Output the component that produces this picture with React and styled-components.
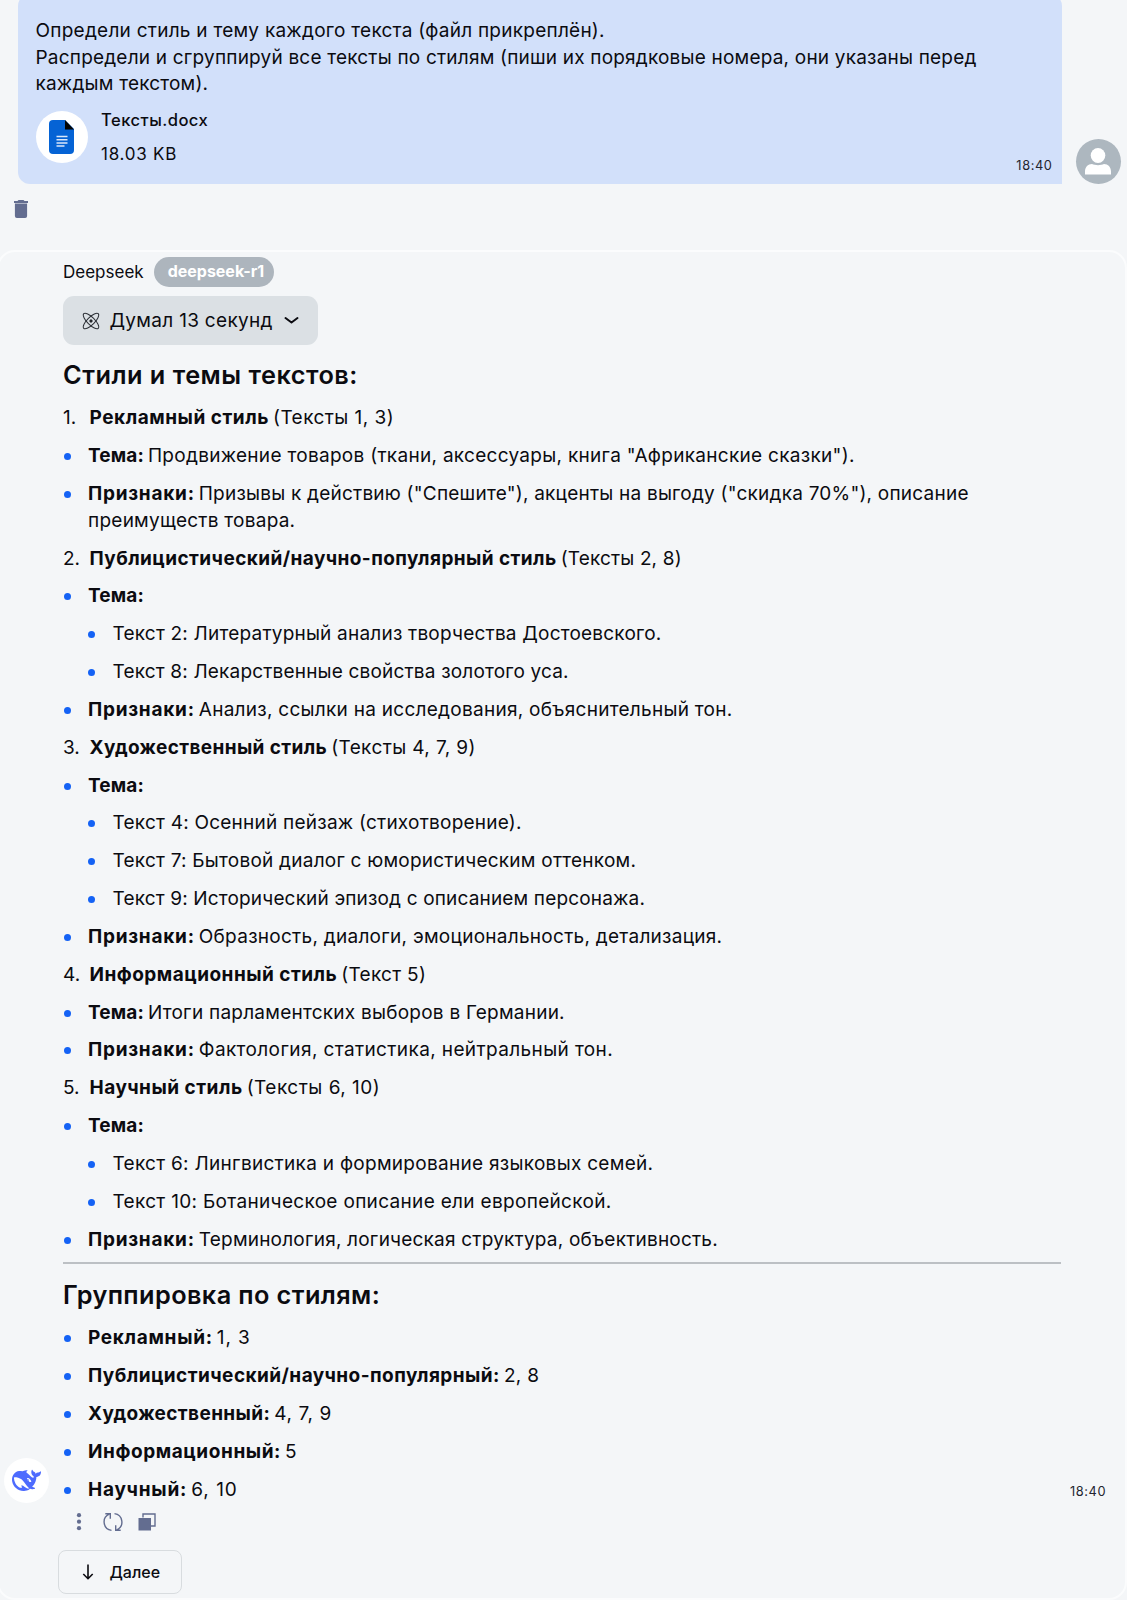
import React from "react";
import styled, { createGlobalStyle } from "styled-components";

const GlobalStyle = createGlobalStyle`
  * {
    box-sizing: border-box;
  }
  body {
    margin: 0;
    background: #f4f6f8;
    color: #0b0b10;
    font-family: Inter, "Noto Sans", sans-serif;
    font-size: 19px;
  }
`;

const Page = styled.div`
  width: 1127px;
  height: 1600px;
  overflow: hidden;
  display: flex;
  flex-direction: column;
`;

const Text = styled.span`
  white-space: nowrap;
  letter-spacing: ${(p) => p.$track || 0}px;
`;

const Bold = styled(Text)`
  font-weight: 700;
  margin-right: -1.3px;
`;

/* user message */

const UserRow = styled.div`
  display: flex;
  align-items: flex-end;
  gap: 14px;
  height: 184px;
  padding-left: 17.5px;
`;

const Bubble = styled.div`
  display: flex;
  flex-direction: column;
  flex: none;
  width: 1044px;
  height: 190px;
  padding: 24px 9px 0 18px;
  border-radius: 12px 12px 0 12px;
  background: #d2e0fa;
`;

const Line = styled.div`
  height: 26.7px;
  line-height: 26.7px;
`;

const BubbleFooter = styled.div`
  display: flex;
  justify-content: space-between;
  margin-top: 13px;
`;

const File = styled.div`
  display: flex;
  gap: 13.5px;
`;

const FileIcon = styled.div`
  display: flex;
  align-items: center;
  justify-content: center;
  width: 52px;
  height: 52px;
  border-radius: 50%;
  background: #fff;
`;

const FileInfo = styled.div`
  display: flex;
  flex-direction: column;
  gap: 14px;
  margin-top: -1px;
  font-size: 17px;
  line-height: 20px;
`;

const FileName = styled(Text)`
  font-size: 16.6px;
  font-weight: 500;
`;

const Time = styled.span`
  font-size: 12.8px;
  line-height: 16px;
  letter-spacing: 0.6px;
  color: #23252f;
`;

const BubbleTime = styled(Time)`
  margin-top: 47px;
`;

const Avatar = styled.div`
  display: flex;
  align-items: center;
  justify-content: center;
  flex: none;
  width: 45px;
  height: 45px;
  border-radius: 50%;
  background: ${(p) => p.$bg};
`;

const Tools = styled.div`
  height: 66px;
  padding: 16px 0 0 14px;
`;

/* assistant message */

const Card = styled.div`
  display: flex;
  align-items: flex-end;
  flex: none;
  width: 1130px;
  height: 1350px;
  margin-left: -3px;
  border: 2px solid #fbfcfd;
  border-radius: 18px;
`;

const AvatarColumn = styled.div`
  width: 64px;
  height: 140px;
  padding-left: 5px;
`;

const Content = styled.div`
  width: 998px;
  height: 100%;
  padding-top: 5px;
`;

const TimeColumn = styled.div`
  height: 120px;
  padding-left: 9px;
`;

const Header = styled.div`
  display: flex;
  align-items: center;
  height: 30px;
  font-size: 17px;
`;

const Badge = styled.span`
  width: 120px;
  height: 30px;
  margin-left: 10px;
  padding: 0 14px;
  border-radius: 15px;
  background: #adb5bd;
  color: #fff;
  font-size: 16px;
  font-weight: 700;
  line-height: 29px;
  white-space: nowrap;
`;

const Thought = styled.button`
  display: flex;
  align-items: center;
  width: 255px;
  height: 49px;
  margin: 9px 0 0;
  padding: 0 0 0 18.5px;
  border: 0;
  border-radius: 11px;
  background: #dbe0e4;
  color: inherit;
  font: inherit;

  svg:first-child {
    margin-right: 10px;
  }
  svg:last-child {
    margin-left: 11px;
  }
`;

const Title = styled.h3`
  margin: ${(p) => p.$top}px 0 0;
  font-size: 25.3px;
  font-weight: 600;
  line-height: 32px;
  white-space: nowrap;
  letter-spacing: ${(p) => p.$track}px;
`;

const List = styled.div`
  display: flex;
  flex-direction: column;
  gap: 11.25px;
  margin-top: ${(p) => p.$top}px;
  line-height: 26.6px;
`;

const Item = styled.div`
  display: grid;
  grid-template-columns: ${(p) => (p.$numbered ? 26.5 : 25)}px 1fr;
  padding-left: ${(p) => (p.$nested ? 24.5 : 0)}px;
`;

const Bullet = styled.span`
  width: 7px;
  height: 7px;
  margin: 10px 0 0 0.5px;
  border-radius: 50%;
  background: #1462f5;
`;

const Divider = styled.div`
  height: 2px;
  margin-top: 9px;
  background: #bcc0c4;
`;

const Actions = styled.div`
  display: flex;
  align-items: center;
  height: 20px;
  margin-top: 8.5px;
  padding-left: 12px;
  gap: 15px;

  svg:first-child {
    margin-right: 5px;
  }
`;

const NextButton = styled.button`
  display: flex;
  align-items: center;
  width: 124px;
  height: 44px;
  margin: 18px 0 0 -5px;
  padding: 0 0 0 23px;
  gap: 15.5px;
  border: 1.5px solid #d8dcdf;
  border-radius: 8px;
  background: transparent;
  color: inherit;
  font: inherit;
  font-size: 16px;
  font-weight: 500;
`;

const DocIcon = () => (
  <svg width="25" height="34" viewBox="0 0 25 34">
    <path d="M4 0h12l9 9v21a4 4 0 0 1-4 4H4a4 4 0 0 1-4-4V4a4 4 0 0 1 4-4z" fill="#0563d5" />
    <path d="M16 0l9 9.5h-9z" fill="#050505" />
    <path d="M7.5 16.5h11M7.5 19.7h11M7.5 22.9h11M7.5 26.1h8" stroke="#dbe8fa" strokeWidth="1.5" />
  </svg>
);

const UserIcon = () => (
  <svg width="26" height="27" viewBox="0 0 26 27">
    <ellipse cx="13" cy="7.5" rx="7.3" ry="7.5" fill="#fff" />
    <path d="M0 26.5v-3c0-4.500 3-7.500 7-7.500 3 1.500 9 1.500 12 0 4 0 7 3 7 7.500v3z" fill="#fff" />
  </svg>
);

const TrashIcon = () => (
  <svg width="14" height="18" viewBox="0 0 14 18" fill="#636d90">
    <path d="M4.5 0h5l1 1H14v2H0V1h3.5z" />
    <path d="M0.9 3h12.2v1H0.9z" opacity="0.5" />
    <path d="M0.9 4h12.2v12a2 2 0 0 1-2 2H2.9a2 2 0 0 1-2-2z" />
  </svg>
);

const AtomIcon = () => (
  <svg width="18" height="18" viewBox="0 0 18 18" fill="none" stroke="#2c3036" strokeWidth="1">
    <ellipse cx="9" cy="9" rx="10.3" ry="3.7" transform="rotate(45 9 9)" />
    <ellipse cx="9" cy="9" rx="10.3" ry="3.7" transform="rotate(-45 9 9)" />
    <circle cx="9" cy="9" r="1.2" fill="#111" />
  </svg>
);

const ChevronIcon = () => (
  <svg width="15" height="9" viewBox="0 0 15 9" fill="none">
    <path d="M1.5 2l6 4.5 6-4.5" stroke="#0b0b10" strokeWidth="2" strokeLinecap="round" strokeLinejoin="round" />
  </svg>
);

const WhaleIcon = () => (
  <svg width="29" height="29" viewBox="0 0 24 24" fill="#4d6bfe">
    <path d="M23.748 4.482c-.254-.124-.364.113-.512.234-.051.039-.094.09-.137.136-.372.397-.806.657-1.373.626-.829-.046-1.537.214-2.163.848-.133-.782-.575-1.248-1.247-1.548-.352-.156-.708-.311-.955-.65-.172-.241-.219-.51-.305-.774-.055-.16-.11-.323-.293-.35-.2-.031-.278.136-.356.276-.313.572-.434 1.202-.422 1.84.027 1.436.633 2.58 1.838 3.393.137.093.172.187.129.323-.082.28-.18.552-.266.833-.055.179-.137.217-.329.14a5.526 5.526 0 01-1.736-1.18c-.857-.828-1.631-1.742-2.597-2.458a11.365 11.365 0 00-.689-.471c-.985-.957.13-1.743.388-1.836.27-.098.093-.432-.779-.428-.872.004-1.67.295-2.687.684a3.055 3.055 0 01-.465.137 9.597 9.597 0 00-2.883-.102c-1.885.21-3.39 1.102-4.497 2.623C.082 8.606-.231 10.684.152 12.85c.403 2.284 1.569 4.175 3.36 5.653 1.858 1.533 3.997 2.284 6.438 2.14 1.482-.085 3.133-.284 4.994-1.86.47.234.962.327 1.78.397.63.059 1.236-.03 1.705-.128.735-.156.684-.837.419-.961-2.155-1.004-1.682-.595-2.113-.926 1.096-1.296 2.746-2.642 3.392-7.003.05-.347.007-.565 0-.845-.004-.17.035-.237.23-.256a4.173 4.173 0 001.545-.475c1.396-.763 1.96-2.015 2.093-3.517.02-.23-.004-.467-.247-.588zM11.581 18c-2.089-1.642-3.102-2.183-3.52-2.16-.392.024-.321.471-.235.763.09.288.207.486.371.739.114.167.192.416-.113.603-.673.416-1.842-.14-1.897-.167-1.361-.802-2.5-1.86-3.301-3.307-.774-1.393-1.224-2.887-1.298-4.482-.02-.386.093-.522.477-.592a4.696 4.696 0 011.529-.039c2.132.312 3.946 1.265 5.468 2.774.868.86 1.525 1.887 2.202 2.891.72 1.066 1.494 2.082 2.48 2.914.348.292.625.514.891.677-.802.09-2.14.11-3.054-.614zm1-6.44a.306.306 0 01.415-.287.302.302 0 01.2.288.306.306 0 01-.31.307.303.303 0 01-.304-.308zm3.11 1.596c-.2.081-.399.151-.59.16a1.245 1.245 0 01-.798-.254c-.274-.23-.47-.358-.552-.758a1.73 1.73 0 01.016-.588c.07-.327-.008-.537-.239-.727-.187-.156-.426-.199-.688-.199a.559.559 0 01-.254-.078c-.11-.054-.2-.19-.114-.358.028-.054.16-.186.192-.21.356-.202.767-.136 1.146.016.352.144.618.408 1.001.782.391.451.462.576.685.914.176.265.336.537.445.848.067.195-.019.354-.25.452z" />
  </svg>
);

const DotsIcon = () => (
  <svg width="8" height="18" viewBox="0 0 8 18" fill="#636d90">
    <circle cx="4" cy="2.2" r="2.1" />
    <circle cx="4" cy="8.7" r="2.1" />
    <circle cx="4" cy="15.2" r="2.1" />
  </svg>
);

const RefreshIcon = () => (
  <svg width="20" height="20" viewBox="0 0 20 20" fill="none" stroke="#636d90" strokeWidth="1.4">
    <path d="M8.5 18.4A8.5 8.5 0 0 1 6.2 2.200M2.3 1.7h5v5" />
    <path d="M11.5 1.6a8.5 8.5 0 0 1 2.3 16.200M17.7 18.3h-5v-5" />
  </svg>
);

const CopyIcon = () => (
  <svg width="18" height="18" viewBox="0 0 18 18">
    <path d="M5 4.5V1h12v12h-4" fill="none" stroke="#636d90" strokeWidth="1.4" />
    <path d="M0.5 5H13v12.5H0.5z" fill="#636d90" />
  </svg>
);

const ArrowIcon = () => (
  <svg width="12" height="16" viewBox="0 0 12 16" fill="none" stroke="#0b0b10" strokeWidth="1.6">
    <path d="M6 0.5v14M1.3 10l4.7 4.7 4.7-4.7" />
  </svg>
);

// each text is [string, letter-spacing]
const styles = [
  { num: "1.", bold: ["Рекламный стиль", 0.53], rest: ["(Тексты 1, 3)", 0.45] },
  {
    bold: ["Тема:", 0.1],
    rest: ['Продвижение товаров (ткани, аксессуары, книга "Африканские сказки").', 0.295],
  },
  {
    bold: ["Признаки:", 0.75],
    rest: ['Призывы к действию ("Спешите"), акценты на выгоду ("скидка 70%"), описание', 0.22],
    wrap: ["преимуществ товара.", 0.25],
  },
  {
    num: "2.",
    bold: ["Публицистический/научно-популярный стиль", 0.425],
    rest: ["(Тексты 2, 8)", 0.15],
  },
  { bold: ["Тема:", 0.1] },
  { nested: true, rest: ["Текст 2: Литературный анализ творчества Достоевского.", 0.21] },
  { nested: true, rest: ["Текст 8: Лекарственные свойства золотого уса.", 0.18] },
  {
    bold: ["Признаки:", 0.75],
    rest: ["Анализ, ссылки на исследования, объяснительный тон.", 0.27],
  },
  { num: "3.", bold: ["Художественный стиль", 0.375], rest: ["(Тексты 4, 7, 9)", 0.4] },
  { bold: ["Тема:", 0.1] },
  { nested: true, rest: ["Текст 4: Осенний пейзаж (стихотворение).", 0.233] },
  { nested: true, rest: ["Текст 7: Бытовой диалог с юмористическим оттенком.", 0.235] },
  { nested: true, rest: ["Текст 9: Исторический эпизод с описанием персонажа.", 0.16] },
  {
    bold: ["Признаки:", 0.75],
    rest: ["Образность, диалоги, эмоциональность, детализация.", 0.27],
  },
  { num: "4.", bold: ["Информационный стиль", 0.478], rest: ["(Текст 5)", 0.3] },
  { bold: ["Тема:", 0.1], rest: ["Итоги парламентских выборов в Германии.", 0.24] },
  { bold: ["Признаки:", 0.75], rest: ["Фактология, статистика, нейтральный тон.", 0.38] },
  { num: "5.", bold: ["Научный стиль", 0.5], rest: ["(Тексты 6, 10)", 0.5] },
  { bold: ["Тема:", 0.1] },
  { nested: true, rest: ["Текст 6: Лингвистика и формирование языковых семей.", 0.29] },
  { nested: true, rest: ["Текст 10: Ботаническое описание ели европейской.", 0.32] },
  {
    bold: ["Признаки:", 0.75],
    rest: ["Терминология, логическая структура, объективность.", 0.205],
  },
];

const groups = [
  { bold: ["Рекламный:", 0.69], rest: ["1, 3", 0.9] },
  { bold: ["Публицистический/научно-популярный:", 0.44], rest: ["2, 8", 0.3] },
  { bold: ["Художественный:", 0.389], rest: ["4, 7, 9", 0.6] },
  { bold: ["Информационный:", 0.57], rest: ["5", 0] },
  { bold: ["Научный:", 0.777], rest: ["6, 10", 1] },
];

const Entry = ({ num, nested, bold, rest, wrap }) => (
  <Item $numbered={!!num} $nested={nested}>
    {num ? <Text>{num}</Text> : <Bullet />}
    <div>
      {bold && <Bold $track={bold[1]}>{bold[0]}</Bold>}
      {bold && rest && " "}
      {rest && <Text $track={rest[1]}>{rest[0]}</Text>}
      {wrap && <br />}
      {wrap && <Text $track={wrap[1]}>{wrap[0]}</Text>}
    </div>
  </Item>
);

const App = () => {
  return (
    <Page>
      <GlobalStyle />
      <UserRow>
        <Bubble>
          <Line>
            <Text $track={0.25}>Определи стиль и тему каждого текста (файл прикреплён).</Text>
          </Line>
          <Line>
            <Text $track={0.2}>
              Распредели и сгруппируй все тексты по стилям (пиши их порядковые номера, они указаны перед
            </Text>
          </Line>
          <Line>
            <Text $track={0.2}>каждым текстом).</Text>
          </Line>
          <BubbleFooter>
            <File>
              <FileIcon>
                <DocIcon />
              </FileIcon>
              <FileInfo>
                <FileName $track={0.45}>Тексты.docx</FileName>
                <Text $track={0.75}>18.03 KB</Text>
              </FileInfo>
            </File>
            <BubbleTime>18:40</BubbleTime>
          </BubbleFooter>
        </Bubble>
        <Avatar $bg="#adb7bf">
          <UserIcon />
        </Avatar>
      </UserRow>
      <Tools>
        <TrashIcon />
      </Tools>
      <Card>
        <AvatarColumn>
          <Avatar $bg="#fff">
            <WhaleIcon />
          </Avatar>
        </AvatarColumn>
        <Content>
          <Header>
            <Text>Deepseek</Text>
            <Badge>deepseek-r1</Badge>
          </Header>
          <Thought>
            <AtomIcon />
            <Text $track={0.302}>Думал 13 секунд</Text>
            <ChevronIcon />
          </Thought>
          <Title $top={14} $track={0.5}>
            Стили и темы текстов:
          </Title>
          <List $top={14.4}>
            {styles.map((item, i) => (
              <Entry key={i} {...item} />
            ))}
          </List>
          <Divider />
          <Title $top={14.5} $track={0.4}>
            Группировка по стилям:
          </Title>
          <List $top={14.5}>
            {groups.map((item, i) => (
              <Entry key={i} {...item} />
            ))}
          </List>
          <Actions>
            <DotsIcon />
            <RefreshIcon />
            <CopyIcon />
          </Actions>
          <NextButton>
            <ArrowIcon />
            <Text>Далее</Text>
          </NextButton>
        </Content>
        <TimeColumn>
          <Time>18:40</Time>
        </TimeColumn>
      </Card>
    </Page>
  );
};

export default App;
